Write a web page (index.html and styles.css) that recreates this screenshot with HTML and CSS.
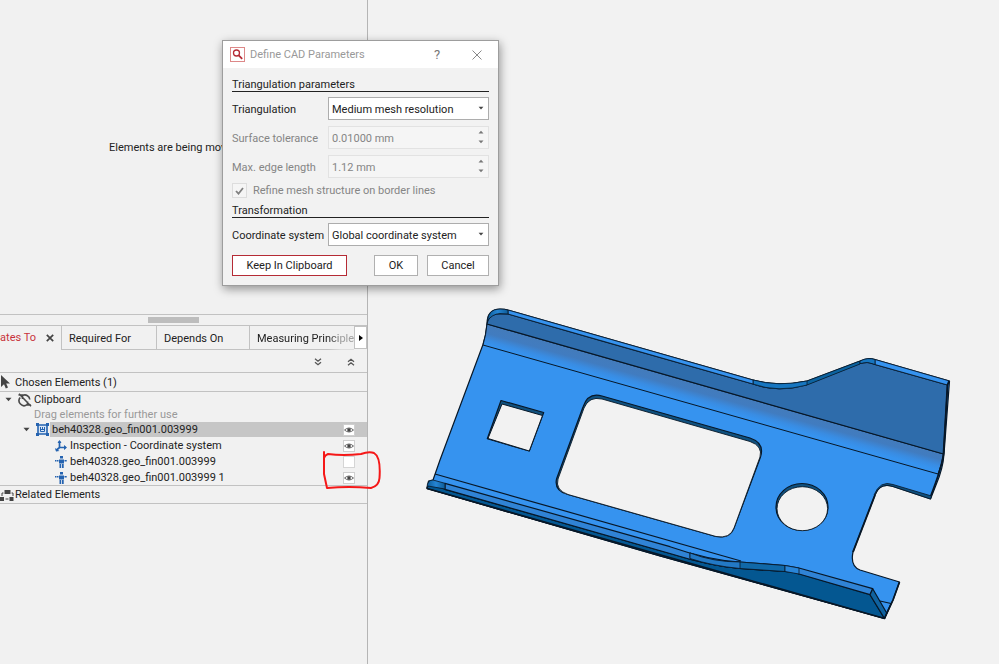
FILE: index.html
```html
<!DOCTYPE html>
<html lang="en">
<head>
<meta charset="utf-8">
<title>Define CAD Parameters</title>
<link rel="stylesheet" href="styles.css">
</head>
<body>
<svg class="defs" width="0" height="0" aria-hidden="true">
  <defs>
    <symbol id="eye" viewBox="0 0 12 12"><rect x=".5" y=".5" width="11" height="11" fill="#fff" stroke="#cfcfcf"/><path d="M1.500 6Q6 2 10.500 6Q6 10 1.500 6Z" fill="#fff" stroke="#666"/><circle cx="6" cy="6" r="1.800" fill="#444"/></symbol>
    <symbol id="body" viewBox="0 0 12 12"><path d="M5 0h3v2.500H5zM4 3.500h5v4H4zM4.500 8h1.700v4H4.500zM7 8h1.700v4H7zM0 4h1.500v1.500H0zM2 4h1.500v1.500H2zM9.500 4H11v1.500H9.500zM11.300 4h.7v1.500h-.7z" fill="#2563b0"/></symbol>
    <symbol id="caret" viewBox="0 0 7 5"><path d="M.5 .8h6L3.500 4.300Z" fill="#444"/></symbol>
    <symbol id="spin" viewBox="0 0 6 14"><path d="M.5 3.500h5L3 .8ZM.5 10.500h5L3 13.200Z" fill="#777"/></symbol>
  </defs>
</svg>
<div class="app">
  <aside class="side">
    <div class="notice">Elements are being moved</div>
    <div class="scroll"><span class="thumb"></span></div>
    <nav class="tabs">
      <div class="tab current"><a href="#">Relates To</a><button class="close" aria-label="Close tab"><svg viewBox="0 0 8 8"><path d="M.8.8l6.400 6.400M7.200.8L.8 7.200" stroke="#444" stroke-width="1.700"/></svg></button></div>
      <a class="tab required" href="#">Required For</a>
      <a class="tab depends" href="#">Depends On</a>
      <a class="tab measuring" href="#">Measuring Principle</a>
      <button class="more" aria-label="More tabs"><svg viewBox="0 0 4 6"><path d="M0 0v6l4-3Z"/></svg></button>
    </nav>
    <div class="tools">
      <button aria-label="Expand all"><svg viewBox="0 0 8 8"><path d="M1 .7l3 2.500 3-2.500M1 4.200l3 2.500 3-2.500" fill="none" stroke="#555" stroke-width="1.300"/></svg></button>
      <button aria-label="Collapse all"><svg viewBox="0 0 8 8"><path d="M1 3.800l3-2.500 3 2.500M1 7.300l3-2.500 3 2.500" fill="none" stroke="#555" stroke-width="1.300"/></svg></button>
    </div>
    <div class="group chosen"><svg class="pointer" viewBox="0 0 10 14"><path d="M1 0v12l3-2.700L5.800 13.500 8 12.500 6.200 8.500H10Z" fill="#444"/></svg>Chosen Elements (1)</div>
    <div class="tree">
      <div class="row root"><svg class="caret"><use href="#caret"/></svg><svg class="clip" viewBox="0 0 14 14"><path d="M5 2.300A5 5 0 0 1 11.800 6.500M2.200 4.500A5 5 0 0 0 9 11.700M.5 2H4.500V6M13 12H9.500V8.500M1 .8l12 12.400" fill="none" stroke="#4a4a4a" stroke-width="1.600"/></svg>Clipboard</div>
      <div class="hint">Drag elements for further use</div>
      <div class="items">
        <div class="row part"><svg class="caret"><use href="#caret"/></svg><svg class="box" viewBox="0 0 13 13"><path d="M2 2h9v9H2z" fill="#dbe7f6" stroke="#2563b0" stroke-width="1.600"/><path d="M0 0h3v3H0zM10 0h3v3h-3zM0 10h3v3H0zM10 10h3v3h-3z" fill="#2563b0"/><path d="M4.500 4v4.500h4V4M6.500 4v2.500M4 6.500h5" fill="none" stroke="#2563b0"/></svg><span class="name">beh40328.geo_fin001.003999</span><svg class="eye"><use href="#eye"/></svg></div>
        <div class="row child"><svg class="kind" viewBox="0 0 12 12"><path d="M4.500 1v6.500M4.500 7.500H11M4.500 7.500L1 10.500" fill="none" stroke="#2563b0" stroke-width="1.700"/><path d="M2.500 3l2-3 2 3ZM9 5l3 2.500L9 10ZM0 8l1 3.500 3.500-.5Z" fill="#2563b0"/></svg><span class="name">Inspection - Coordinate system</span><svg class="eye"><use href="#eye"/></svg></div>
        <div class="row child"><svg class="kind"><use href="#body"/></svg><span class="name">beh40328.geo_fin001.003999</span><span class="eye blank"></span></div>
        <div class="row child"><svg class="kind"><use href="#body"/></svg><span class="name">beh40328.geo_fin001.003999 1</span><svg class="eye"><use href="#eye"/></svg></div>
      </div>
    </div>
    <div class="group related"><svg class="relation" viewBox="0 0 14 12"><path d="M4.500 1h6v4h-6zM0 8h4v4H0zM9.500 8h4v4h-4z" fill="#444"/><path d="M2 7V4h1.500M11.500 4H13v3M5.500 10h3" fill="none" stroke="#444"/></svg>Related Elements</div>
  </aside>

  <main class="view">
    <svg class="model" viewBox="368 0 631 664" preserveAspectRatio="xMinYMin meet" role="img" aria-label="Sheet metal part">
      <defs>
        <linearGradient id="bend" gradientUnits="userSpaceOnUse" x1="715" y1="389" x2="710" y2="407"><stop offset="0" stop-color="#437bbb"/><stop offset=".4" stop-color="#417cc0"/><stop offset=".75" stop-color="#398ce2"/><stop offset="1" stop-color="#3693ef"/></linearGradient>
        <linearGradient id="corner"><stop offset="0" stop-color="#0d5c98"/><stop offset=".5" stop-color="#2585d4"/><stop offset="1" stop-color="#0d5c98"/></linearGradient>
      </defs>
      <g stroke="#071727" stroke-width="1.200" stroke-linejoin="round">
        <path d="M487 324Q487 309 500 309Q505 309 508 310L753 380Q778 387 807 381L860 361Q868 357 875 359.500L949.500 381L944 454Q943 469 936 485L930.500 499L893 486.500Q880 482 875 495L853 552Q850 566 860 570L899.500 582L893 600L884.500 618.500L660 556L427 488.500L428.500 481L433 480L440 460L483 344.500Q486 335 487 324Z" fill="#3693ef"/>
        <path d="M487 324L943.500 454Q942 464 938 474L483 345Q486 335 487 324Z" fill="url(#bend)" stroke-width="1"/>
        <path d="M487 324Q488 315 497 314L508 314L600 340.500L753 384Q778 393 807 384.500L860 363.500Q868 361 875 364.500L947.500 385L943.500 454Z" fill="#2e6cab"/>
        <path d="M807 381L860 361V364L807 385Q778 393 753 384V380Q778 387 807 381Z" fill="#0c63a0" stroke-width=".7"/>
        <path d="M753 380Q778 387 807 381V385Q778 393 753 384Z" fill="#1776c0" stroke-width=".7"/>
        <path d="M508 310L753 380V384L508 314ZM875 359.500L949.500 381L947.500 385L875 364.500Z" fill="#3693ef" stroke-width=".8"/>
        <path d="M487.500 321Q488 309 500 309Q505 309 508 310V314L500 313.500Q492 314 487.500 321Z" fill="url(#corner)" stroke-width=".8"/>
        <path d="M860 361Q868 357 875 359.500V364.500Q868 361 860 363.500Z" fill="#1776c0" stroke-width=".8"/>
        <path d="M949 381L947.500 385L943.500 454Q942 467 930 498" fill="none" stroke-width="1.800"/>

        <path d="M501 400.500L543.700 412.500L529.300 451L487.300 438.700Z" fill="#10517f"/>
        <path d="M502 404L542.500 415.500L529.300 451L488 438.500Z" fill="#f2f2f2" stroke-width="1"/>
        <path d="M602 396L750 438Q765 443 760.500 457L734 528Q730 539 716 536.500L568 494.500Q554 491 556.500 479L583 407Q588 392 602 396Z" fill="#10517f"/>
        <path d="M602 399L750 441.500Q763 446 760 457L734 528Q730 539 716 536.500L568 494.500Q555 490 558 479L584 408Q589 396 602 399Z" fill="#f2f2f2" stroke-width=".9"/>
        <ellipse cx="802" cy="507" rx="26" ry="23.500" fill="#10517f"/>
        <ellipse cx="802.300" cy="508.700" rx="25.300" ry="22" fill="#f2f2f2" stroke-width=".9"/>

        <path d="M875 495Q880 482 893 486.500L930.500 499L931.500 496L893 484.500Q880 480 874 495" fill="#10517f" stroke-width=".8"/>
        <path d="M853 552L875 495" fill="none" stroke-width="1.900"/>
        <path d="M427 488.500L428.500 484L445 489.300L670 553.500Q710 566 740 568.500L785 571.500Q792 571.500 800 574L870 594.500L884.500 618.500L660 556Z" fill="#045791"/>
        <path d="M445 483.300L670 546.700Q708 560 740 562L785 565.500L799 568L872.700 588.700L870 594.700L799 574Q792 571.500 785 571.500L740 568.500Q710 566 670 553.500L445 489.300Z" fill="#3083d5"/>
        <path d="M690 553Q713 562 740 562L785 565.500V571.500L740 568.500Q713 566 690 558.500Z" fill="#1068a8" stroke-width=".8"/>
        <path d="M690 553Q713 562 740 562V568.500Q713 566 690 558.500Z" fill="#2379c5" stroke-width=".8"/>
        <path d="M785 565.500L799 568V574L785 571.500Z" fill="#2985d8" stroke-width=".8"/>
        <path d="M427 488Q427 480 433 480L445 483.300V489L428 486Z" fill="url(#corner)" stroke-width=".8"/>
        <path d="M435 474L741 561" fill="none"/>
        <path d="M872.700 588.700L886.700 613L884.500 618.500L870 594.700Z" fill="#10629f"/>
        <path d="M880 601L891 603.500L886.700 613" fill="none"/>
        <path d="M899.500 582L893 600L884.500 618.500L427 488.500" fill="none" stroke-width="1.700"/>
      </g>
    </svg>
  </main>
</div>

<svg class="markup" viewBox="0 0 60 42" aria-hidden="true"><path d="M3 2V24L6 38Q28 36 50 38Q58 36 58.500 28Q60 7 53 3Q48 1 40 4Q22 6 7 4Q4 5 3 8" fill="none" stroke="#f51818" stroke-width="2" stroke-linecap="round" stroke-linejoin="round"/></svg>

<section class="dialog" role="dialog" aria-labelledby="title">
  <header class="bar">
    <svg class="logo" viewBox="0 0 15 15"><rect x=".5" y=".5" width="14" height="14" fill="#fff" stroke="#d88"/><circle cx="6.500" cy="6" r="3" fill="none" stroke="#b52b35" stroke-width="1.300"/><path d="M8.700 8.300l3.500 3.500" stroke="#b52b35" stroke-width="1.800"/></svg>
    <h1 id="title">Define CAD Parameters</h1>
    <button class="help" aria-label="Help">?</button>
    <button class="dismiss" aria-label="Close"><svg viewBox="0 0 10 10"><path d="M.5.5l9 9M9.500.5l-9 9" stroke="#888"/></svg></button>
  </header>
  <form class="form">
    <h2>Triangulation parameters</h2>
    <div class="fields">
      <label for="tri">Triangulation</label>
      <div class="control"><select id="tri"><option>Medium mesh resolution</option></select><svg class="arrow"><use href="#caret"/></svg></div>
      <label class="off" for="tol">Surface tolerance</label>
      <div class="control"><input id="tol" type="text" value="0.01000 mm" disabled><svg class="spin"><use href="#spin"/></svg></div>
      <label class="off" for="edge">Max. edge length</label>
      <div class="control"><input id="edge" type="text" value="1.12 mm" disabled><svg class="spin"><use href="#spin"/></svg></div>
    </div>
    <div class="check"><span class="tick"><input id="refine" type="checkbox" checked disabled><svg viewBox="0 0 9 8"><path d="M1 4l2.500 2.700L8 1" fill="none" stroke="#808080" stroke-width="1.800"/></svg></span><label for="refine">Refine mesh structure on border lines</label></div>
    <h2>Transformation</h2>
    <div class="fields">
      <label for="sys">Coordinate system</label>
      <div class="control"><select id="sys"><option>Global coordinate system</option></select><svg class="arrow"><use href="#caret"/></svg></div>
    </div>
    <div class="actions">
      <button type="button" class="keep">Keep In Clipboard</button>
      <button type="button" class="ok">OK</button>
      <button type="button" class="cancel">Cancel</button>
    </div>
  </form>
</section>
</body>
</html>
```
FILE: styles.css
```css
* { box-sizing: border-box; }
body { margin: 0; background: #f1f1f1; color: #222; font: 11px/15px Roboto, "Noto Sans", sans-serif; }
button, input, select { font: inherit; color: inherit; margin: 0; padding: 0; border: 0; border-radius: 0; background: none; }
a { color: inherit; text-decoration: none; }
svg { display: block; flex: none; }
.defs { position: absolute; }

.app { display: grid; grid-template-columns: 368px 1fr; min-height: 100vh; overflow: hidden; }
.side { border-right: 1px solid #b5b5b5; min-width: 0; }
.view { min-width: 0; background: #f2f2f2; }
.model { width: 100%; height: auto; }

.notice { height: 314px; padding: 140px 0 0 109px; white-space: nowrap; overflow: hidden; }
.scroll { height: 12px; padding-top: 2px; border: solid #c2c2c2; border-width: 1px 0; }
.thumb { display: block; width: 51px; height: 6px; margin-left: 148px; background: #bdbdbd; }

.tabs { display: flex; height: 24px; line-height: 26px; white-space: nowrap; }
.tab { flex: none; border: solid #c2c2c2; border-width: 0 0 1px 1px; padding-left: 7px; overflow: hidden; }
.current { display: flex; align-items: center; justify-content: flex-end; gap: 10px; width: 61px; padding: 0 7px 0 0; border: 0; color: #c8323c; }
.close { flex: none; width: 8px; height: 8px; }
.required { width: 95px; }
.depends { width: 93px; }
.measuring { flex: 1 1 0; min-width: 0; border-right: 0; -webkit-mask-image: linear-gradient(to right, #000 75%, #0006 88%); mask-image: linear-gradient(to right, #000 75%, #0006 88%); }
.more { flex: none; display: grid; place-items: center; width: 13px; height: 23px; background: #fff; border: 1px solid #c2c2c2; }
.more svg { width: 4px; height: 6px; }

.tools { display: flex; justify-content: flex-end; gap: 25px; height: 23px; padding: 8px 12px 0 0; border-bottom: 1px solid #c2c2c2; }
.tools button { width: 8px; height: 8px; }
.group { display: flex; align-items: center; border-bottom: 1px solid #c2c2c2; }
.chosen { height: 19px; gap: 5px; }
.pointer { width: 10px; height: 14px; }
.related { height: 18px; gap: 1px; }
.relation { width: 14px; height: 12px; }

.tree { border-bottom: 1px solid #c2c2c2; }
.row { display: flex; align-items: center; height: 15px; }
.caret { width: 7px; height: 5px; }
.root { padding-left: 5px; gap: 6px; }
.clip { width: 14px; height: 14px; margin-right: -4px; }
.hint { height: 15px; padding-left: 34px; color: #999; }
.items { display: grid; gap: 1px; }
.part { padding-left: 23px; gap: 6px; background: linear-gradient(to right, transparent 50px, #c6c6c6 50px); }
.box { width: 13px; height: 13px; margin-right: -6px; }
.name { flex: 1; padding-left: 3px; white-space: nowrap; }
.child { padding-left: 55px; }
.kind { width: 12px; height: 12px; }
.eye { width: 12px; height: 12px; margin-right: 12px; }
.blank { background: #fff; border: 1px solid #d5d5d5; }

.markup { position: absolute; left: 321px; top: 450px; width: 60px; height: 42px; }

.dialog { position: absolute; left: 222px; top: 40px; width: 277px; background: #f2f2f2; border: 1px solid #9d9d9d; box-shadow: 1px 3px 9px #0006; }
.bar { display: flex; align-items: center; height: 27px; padding: 0 16px 0 7px; background: #fff; color: #999; }
.logo { width: 15px; height: 15px; }
h1 { flex: 1; margin: 0 0 0 5px; font-size: 11px; font-weight: 400; white-space: nowrap; }
.help { width: 12px; margin-right: 29px; color: #777; font-size: 13px; }
.dismiss { width: 10px; height: 10px; }
.form { padding: 8px 9px 9px; }
h2 { height: 16px; margin: 0 0 5px; font-size: 11px; font-weight: 400; line-height: 17px; border-bottom: 1px solid #222; }
.fields { display: grid; grid-template-columns: 96px 1fr; row-gap: 6px; align-items: center; white-space: nowrap; }
.fields label { padding-top: 2px; }
.off, .check { color: #858585; }
.control { position: relative; }
.control select, .control input { display: block; appearance: none; width: 100%; height: 23px; padding: 2px 3px 0; border: 1px solid #adadad; background: #fff; }
.control input:disabled { color: #858585; border-color: #e2e2e2; background: #f5f5f5; }
.arrow { position: absolute; right: 5px; top: 9px; width: 6px; height: 4px; pointer-events: none; }
.spin { position: absolute; right: 5px; top: 4px; width: 6px; height: 14px; }
.check { display: flex; align-items: center; gap: 6px; height: 15px; margin: 5px 0 4px; }
.tick { position: relative; width: 15px; height: 15px; }
.tick input { display: block; appearance: none; width: 15px; height: 15px; background: #f5f5f5; border: 1px solid #ddd; }
.tick svg { position: absolute; left: 3px; top: 4px; width: 9px; height: 8px; }
.actions { display: flex; gap: 9px; margin-top: 9px; }
.actions button { height: 21px; background: #fff; border: 1px solid #b0b0b0; }
.actions .keep { width: 115px; border-color: #b52b35; }
.ok { width: 44px; margin-left: auto; }
.cancel { width: 62px; }
```
